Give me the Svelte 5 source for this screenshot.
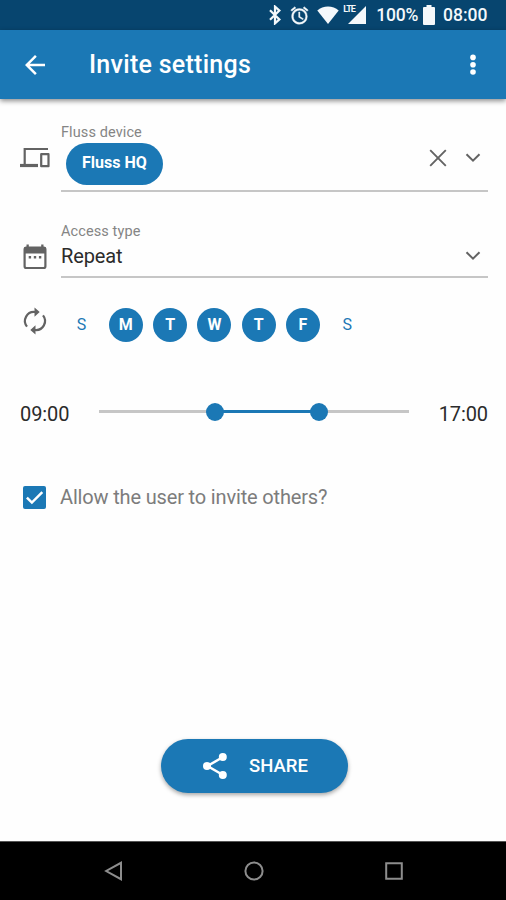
<script lang="ts">
  let device = $state('Fluss HQ');
  let canInvite = $state(true);
  let days = $state([
    { label: 'S', on: false },
    { label: 'M', on: true },
    { label: 'T', on: true },
    { label: 'W', on: true },
    { label: 'T', on: true },
    { label: 'F', on: true },
    { label: 'S', on: false },
  ]);

  // slider positions in percent of the track
  const range = { from: 37.3, to: 71.1 };
</script>

{#snippet chevron()}
  <svg class="chevron" width="16" height="10" viewBox="0 0 16 10" aria-hidden="true">
    <path d="M1.5 1.2 8 7.7l6.5-6.5" fill="none" stroke="currentColor" stroke-width="2" />
  </svg>
{/snippet}

<div class="screen">
  <div class="status">
    <svg class="bluetooth" width="12" height="20" viewBox="0 0 12 20" aria-hidden="true">
      <path d="m1 5.2 9.4 9.2L6 18.4V1.6l4.4 4L1 14.8" fill="none" stroke="currentColor" stroke-width="2.2" />
    </svg>
    <svg class="alarm" width="21" height="21" viewBox="0 0 24 24" aria-hidden="true">
      <path fill="currentColor" stroke="currentColor" stroke-width=".4" d="m22 5.72-4.6-3.86-1.29 1.53 4.6 3.86L22 5.72zM7.88 3.39 6.6 1.86 2 5.71l1.29 1.53 4.59-3.85zM12.5 8H11v6l4.75 2.85.75-1.23-4-2.37V8zM12 4c-4.97 0-9 4.03-9 9s4.02 9 9 9a9 9 0 0 0 0-18zm0 16a7 7 0 1 1 0-14 7 7 0 0 1 0 14z" />
    </svg>
    <svg class="wifi" width="22" height="18" viewBox="0 0 22 18" aria-hidden="true">
      <path fill="currentColor" d="M11 18 .3 4.6C3.2 1.8 7 .4 11 .4s7.8 1.4 10.7 4.2z" />
    </svg>
    <div class="signal">
      <svg width="18" height="18" viewBox="0 0 18 18" aria-hidden="true">
        <path fill="currentColor" d="M18 0v18H0z" />
      </svg>
      <span>LTE</span>
    </div>
    <span class="percent">100%</span>
    <svg class="battery" width="12" height="20" viewBox="0 0 12 20" aria-hidden="true">
      <path fill="currentColor" d="M3.5 0h5v2H11q1 0 1 1v16q0 1-1 1H1q-1 0-1-1V3q0-1 1-1h2.5z" />
    </svg>
    <span class="clock">08:00</span>
  </div>

  <header class="appbar">
    <button type="button" class="icon-btn" aria-label="Back">
      <svg width="30" height="30" viewBox="0 0 24 24" aria-hidden="true">
        <path fill="currentColor" d="M20 11H7.83l5.59-5.59L12 4l-8 8 8 8 1.41-1.41L7.83 13H20v-2z" />
      </svg>
    </button>
    <h1>Invite settings</h1>
    <button type="button" class="icon-btn" aria-label="More">
      <svg width="30" height="30" viewBox="0 0 30 30" aria-hidden="true">
        <g fill="currentColor">
          <circle cx="15" cy="7.4" r="2.8" />
          <circle cx="15" cy="14.7" r="2.8" />
          <circle cx="15" cy="22" r="2.8" />
        </g>
      </svg>
    </button>
  </header>

  <main>
    <div class="row device">
      <svg class="lead" width="30" height="30" viewBox="0 0 30 30" aria-hidden="true">
        <g fill="none" stroke="currentColor">
          <path d="M28 6H4.7v15" stroke-width="2.2" />
          <path d="M0 22.5h18" stroke-width="3.2" />
          <path d="M21.2 11.2h7.3v12h-7.3z" stroke-width="2.2" stroke-linejoin="round" />
        </g>
      </svg>
      <div class="field">
        <div class="label">Fluss device</div>
        <div class="value">
          {#if device}
            <span class="chip">{device}</span>
          {/if}
          <button type="button" class="clear" aria-label="Clear" onclick={() => (device = '')}>
            <svg width="18" height="18" viewBox="0 0 18 18" aria-hidden="true">
              <path d="m1.2 1.2 15.6 15.6m0-15.6L1.2 16.8" stroke="currentColor" stroke-width="1.9" />
            </svg>
          </button>
          {@render chevron()}
        </div>
      </div>
    </div>

    <div class="row access">
      <svg class="lead" width="30" height="30" viewBox="0 0 30 30" aria-hidden="true">
        <rect x="4.6" y="5.6" width="20.8" height="20.4" rx="1.8" fill="none" stroke="currentColor" stroke-width="2.2" />
        <path fill="currentColor" d="M4 5.5h22v6H4zM6.5 2.5h2.3V6H6.5zm14.7 0h2.3V6h-2.3z" />
        <path fill="currentColor" d="M8.7 14h2.4v2.4H8.7zm5.1 0h2.4v2.4h-2.4zm5.1 0h2.4v2.4h-2.4z" />
      </svg>
      <div class="field">
        <div class="label">Access type</div>
        <div class="value">
          <span class="text">Repeat</span>
          {@render chevron()}
        </div>
      </div>
    </div>

    <div class="row repeat">
      <svg class="lead" width="30" height="30" viewBox="0 0 30 30" aria-hidden="true">
        <g fill="none" stroke="currentColor" stroke-width="2.2">
          <path d="M7 20.6A9 9 0 0 1 15 6h2" />
          <path d="M23 9.4A9 9 0 0 1 15 24h-2" />
        </g>
        <path fill="currentColor" d="m14.500 1.500 5.200 4.600-5.200 4.600zm1 27-5.200-4.600 5.200-4.600z" />
      </svg>
      <div class="days">
        {#each days as day}
          <button type="button" class="day" class:is-on={day.on} onclick={() => (day.on = !day.on)}>
            {day.label}
          </button>
        {/each}
      </div>
    </div>

    <div class="hours">
      <span class="time">09:00</span>
      <div class="track">
        <div class="fill" style={`left:${range.from}%;right:${100 - range.to}%`}></div>
        <div class="thumb" style={`left:${range.from}%`}></div>
        <div class="thumb" style={`left:${range.to}%`}></div>
      </div>
      <span class="time">17:00</span>
    </div>

    <label class="invite">
      <input type="checkbox" bind:checked={canInvite} />
      <span class="box">
        {#if canInvite}
          <svg width="23" height="23" viewBox="0 0 23 23" aria-hidden="true">
            <path d="m3.9 11.6 5 5L19.3 6.2" fill="none" stroke="#fff" stroke-width="2.5" />
          </svg>
        {/if}
      </span>
      <span class="invite-text">Allow the user to invite others?</span>
    </label>

    <button type="button" class="share">
      <svg width="30" height="30" viewBox="0 0 30 30" aria-hidden="true">
        <path d="M23 6 7.5 15 23 24" fill="none" stroke="currentColor" stroke-width="2.5" />
        <g fill="currentColor">
          <circle cx="22.8" cy="6" r="4" />
          <circle cx="7" cy="15" r="4" />
          <circle cx="22.8" cy="24" r="4" />
        </g>
      </svg>
      <span>SHARE</span>
    </button>
  </main>

  <nav>
    <svg width="20" height="20" viewBox="0 0 20 20" aria-label="Back">
      <path d="M17 1.8v16.4L2.2 10z" />
    </svg>
    <svg width="20" height="20" viewBox="0 0 20 20" aria-label="Home">
      <circle cx="10" cy="10" r="8.6" />
    </svg>
    <svg width="20" height="20" viewBox="0 0 20 20" aria-label="Recents">
      <path d="M2.2 2.2h15.6v15.6H2.2z" />
    </svg>
  </nav>
</div>

<style>
  :global(body) {
    background: #fefefe;
  }

  .screen {
    --blue: #1b78b5;
    --grey: #636363;
    display: flex;
    flex-direction: column;
    width: 506px;
    height: 900px;
    overflow: hidden;
    background: #fefefe;
    color: #2b2b2b;
    font-family: Roboto, sans-serif;
  }

  button {
    padding: 0;
    border: 0;
    background: none;
    color: inherit;
    font: inherit;
  }

  svg {
    display: block;
    flex: none;
  }

  .status {
    display: flex;
    flex: none;
    align-items: center;
    justify-content: flex-end;
    box-sizing: border-box;
    height: 30px;
    padding-right: 18.5px;
    background: #07456f;
    color: #f4f8fb;
    font-size: 17.5px;
    font-weight: 500;
    line-height: 34px;
  }

  .alarm {
    margin-left: 8px;
  }

  .wifi {
    margin-left: 7px;
  }

  .signal {
    position: relative;
    margin-left: 9px;
  }

  .signal span {
    position: absolute;
    top: -1px;
    left: -5px;
    font-size: 9px;
    font-weight: 700;
    line-height: 9px;
    letter-spacing: -0.9px;
  }

  .percent {
    margin-left: 10px;
    letter-spacing: -0.2px;
  }

  .battery {
    margin: 0 8px 0 5px;
  }

  .appbar {
    display: flex;
    flex: none;
    align-items: center;
    box-sizing: border-box;
    height: 69px;
    padding: 0 18px 0 20px;
    background: var(--blue);
    box-shadow: 0 2px 5px rgba(0, 0, 0, 0.45);
    color: #fff;
  }

  h1 {
    flex: 1;
    margin: 0 0 0 39px;
    font-size: 25px;
    font-weight: 500;
    line-height: 30px;
    letter-spacing: 0.28px;
  }

  main {
    display: flex;
    flex: 1;
    flex-direction: column;
    padding: 0 18px 0 20px;
  }

  .row {
    display: flex;
    color: var(--grey);
  }

  .field {
    flex: 1;
    margin-left: 11px;
    border-bottom: 2px solid #c6c6c6;
  }

  .label {
    color: #858585;
    font-size: 14.5px;
    line-height: 20px;
    letter-spacing: 0.1px;
  }

  .value {
    display: flex;
    align-items: center;
  }

  .chevron {
    margin: 0 7px 0 auto;
  }

  .device {
    margin-top: 24px;
  }

  .device .lead {
    margin-top: 20px;
  }

  .device .field {
    height: 67px;
  }

  .device .value {
    height: 44px;
    padding-left: 5px;
    margin-top: -1px;
  }

  .chip {
    height: 42px;
    padding: 0 16px;
    border-radius: 21px;
    background: var(--blue);
    color: #fff;
    font-size: 16px;
    font-weight: 700;
    line-height: 39px;
  }

  .clear {
    margin: -12px 0 0 auto;
  }

  .device .chevron {
    margin: -12px 7px 0 18px;
  }

  .access {
    margin-top: 29px;
  }

  .access .lead {
    margin-top: 21px;
  }

  .access .field {
    height: 55px;
  }

  .access .label {
    line-height: 21px;
  }

  .access .value {
    height: 28px;
  }

  .text {
    color: #2b2b2b;
    font-size: 20px;
    letter-spacing: -0.15px;
  }

  .repeat {
    margin-top: 28px;
  }

  .days {
    display: flex;
    gap: 10.3px;
    margin: 2px 0 0 14.5px;
  }

  .day {
    width: 34px;
    height: 34px;
    border-radius: 50%;
    color: var(--blue);
    font-size: 16px;
    line-height: 34px;
    text-align: center;
  }

  .day.is-on {
    background: var(--blue);
    color: #fff;
    font-weight: 700;
  }

  .hours {
    display: flex;
    align-items: center;
    justify-content: space-between;
    height: 30px;
    margin-top: 57px;
  }

  .time {
    font-size: 20px;
    letter-spacing: -0.1px;
  }

  .track {
    position: relative;
    width: 310px;
    height: 3px;
    margin-top: -5px;
    background: #c6c6c6;
  }

  .fill {
    position: absolute;
    top: 0;
    bottom: 0;
    background: var(--blue);
  }

  .thumb {
    position: absolute;
    top: 50%;
    width: 18px;
    height: 18px;
    border-radius: 50%;
    background: var(--blue);
    transform: translate(-50%, -50%);
  }

  .invite {
    display: flex;
    align-items: center;
    margin-top: 56px;
    padding-left: 3px;
  }

  .invite input {
    position: absolute;
    opacity: 0;
  }

  .box {
    width: 23px;
    height: 23px;
    border-radius: 2px;
    background: var(--blue);
  }

  .invite-text {
    margin-left: 14px;
    color: #7c7c7c;
    font-size: 20px;
    line-height: 24px;
    letter-spacing: -0.16px;
  }

  .share {
    display: flex;
    align-items: center;
    align-self: center;
    box-sizing: border-box;
    width: 187px;
    height: 54px;
    margin: auto 0 48px 0;
    padding-left: 39.5px;
    border-radius: 27px;
    background: var(--blue);
    box-shadow: 0 2px 4px rgba(0, 0, 0, 0.35);
    color: #fff;
    font-size: 18.5px;
    font-weight: 500;
  }

  .share span {
    margin-left: 19px;
  }

  nav {
    display: flex;
    flex: none;
    align-items: center;
    justify-content: center;
    gap: 120px;
    height: 58px;
    padding-left: 1px;
    border-top: 1px solid #555;
    background: #000;
  }

  nav svg {
    fill: none;
    stroke: #8d8d8d;
    stroke-width: 2;
  }
</style>
